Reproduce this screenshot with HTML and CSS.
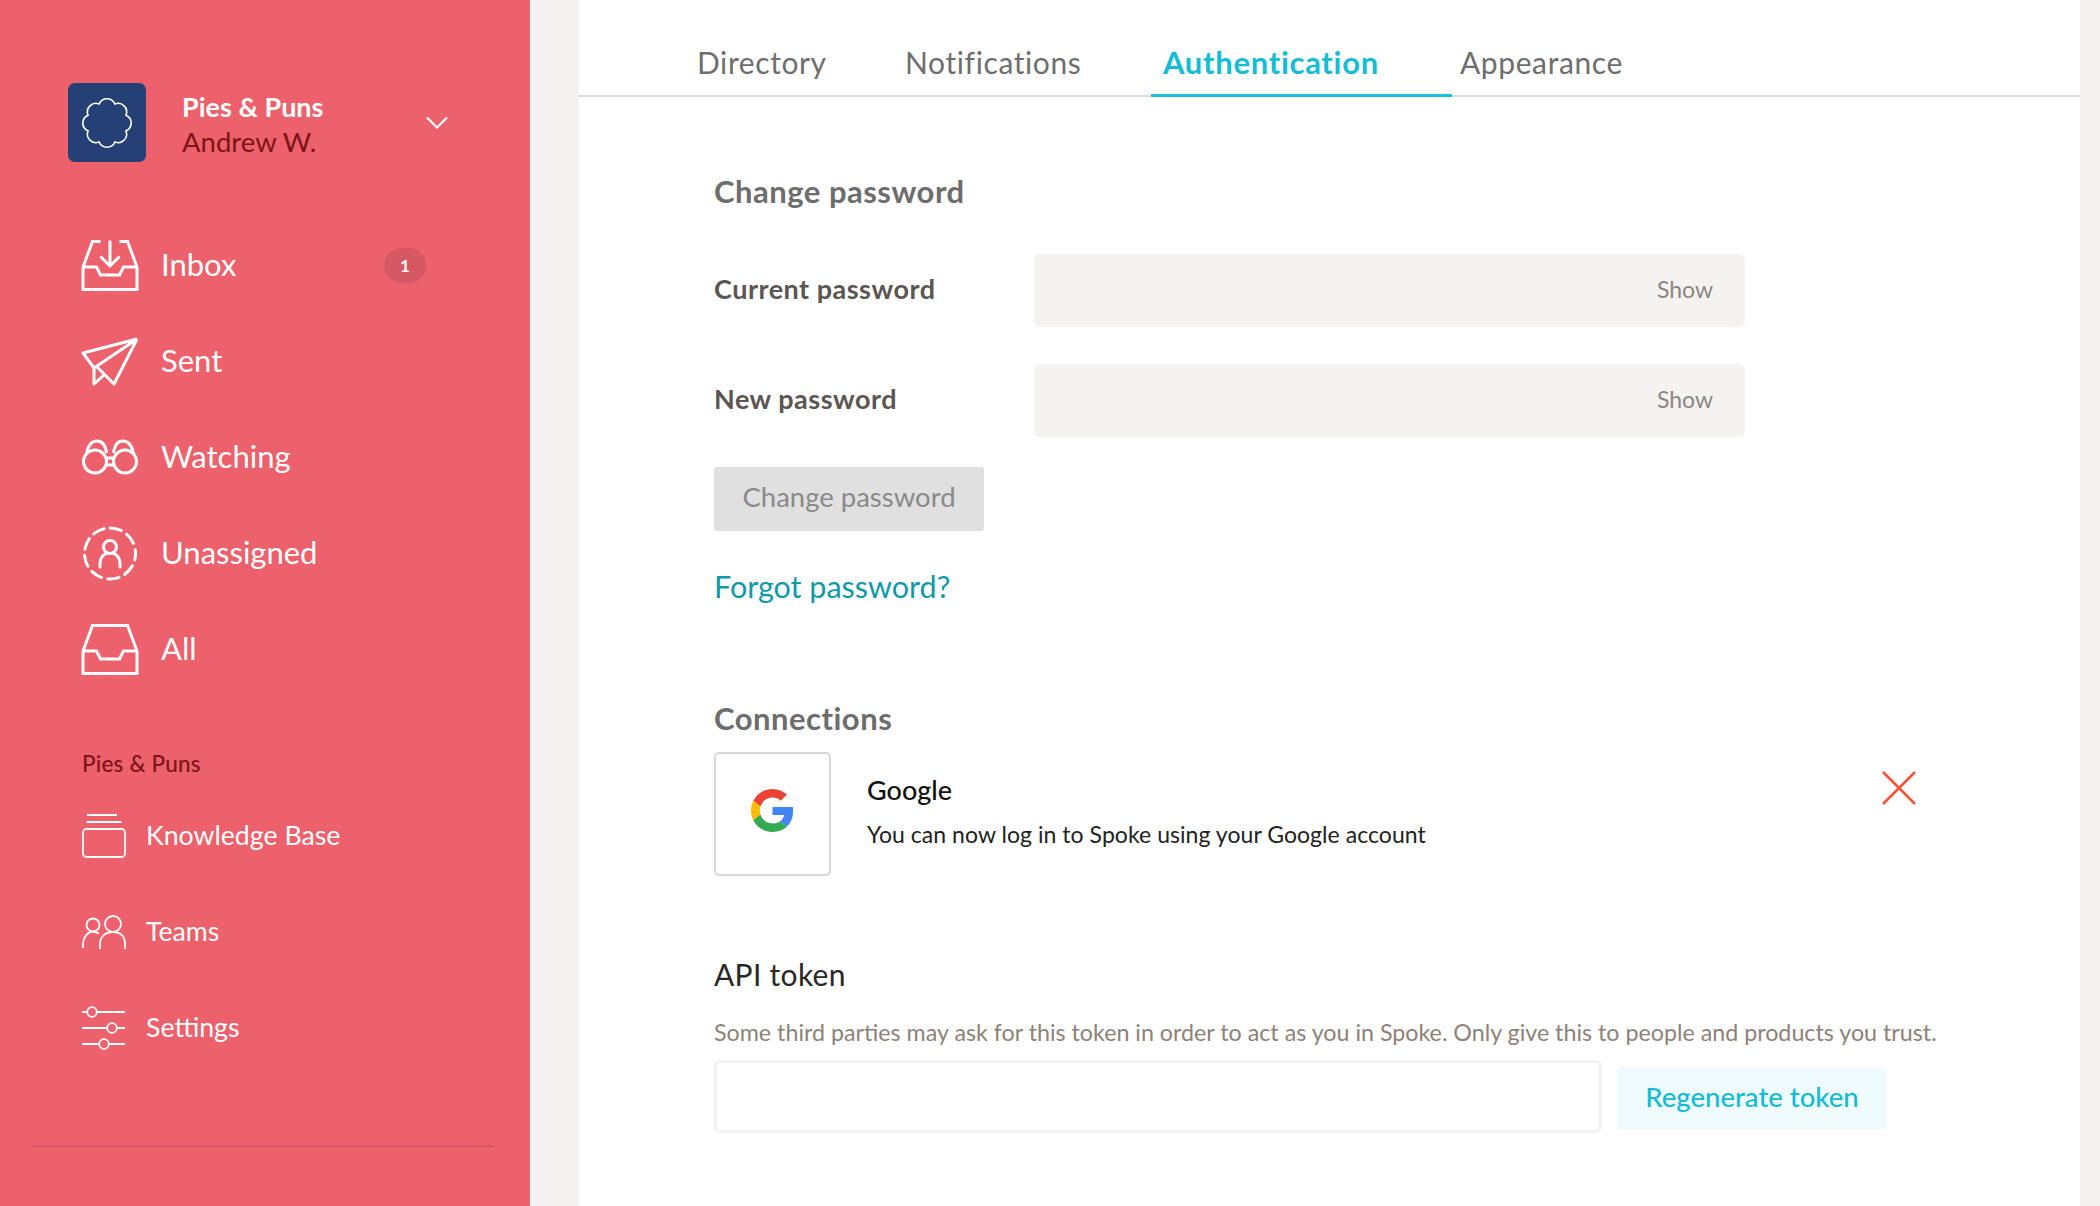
FILE: index.html
```html
<!DOCTYPE html>
<html lang="en">
<head>
<meta charset="utf-8">
<title>Settings – Authentication</title>
<link rel="stylesheet" href="styles.css">
</head>
<body>
<div class="app">
  <aside class="sidebar">
    <header class="account">
      <div class="avatar">
        <svg width="50" height="50" viewBox="0 0 50 50" fill="none" stroke="#fff" stroke-width="1.600"><path d="M17.150 6.060A8.500 8.500 0 0 1 32.850 6.060 8.500 8.500 0 0 1 43.940 17.150 8.500 8.500 0 0 1 43.940 32.850 8.500 8.500 0 0 1 32.850 43.940 8.500 8.500 0 0 1 17.150 43.940 8.500 8.500 0 0 1 6.060 32.850 8.500 8.500 0 0 1 6.060 17.150 8.500 8.500 0 0 1 17.150 6.060Z"/></svg>
      </div>
      <div class="account-text">
        <div class="org">Pies &amp; Puns</div>
        <div class="user">Andrew W.</div>
      </div>
      <svg class="chevron" width="22" height="13" viewBox="0 0 22 13" fill="none" stroke="#fff" stroke-width="2.200"><path d="M1 1.500 11 11.500 21 1.500"/></svg>
    </header>

    <nav class="nav">
      <a class="nav-item">
        <span class="nav-icon"><svg width="58" height="51" viewBox="0 0 58 51" fill="none" stroke="#fff" stroke-width="3"><path d="M2 27v22.500h54V27M2 27h13.500l4 8h19l4-8H56M2 27 11.500 1.500h8M56 27 46.500 1.500h-8M29 .5V26M19.500 16.500 29 26l9.500-9.500"/></svg></span>
        <span class="nav-label">Inbox</span>
        <span class="badge">1</span>
      </a>
      <a class="nav-item">
        <span class="nav-icon"><svg width="58" height="49" viewBox="0 0 58 49" fill="none" stroke="#fff" stroke-width="3" stroke-linejoin="round"><path d="M56 2 2 16 13 31V47L23 38M15 29 33 47 56 2M56 2 13 31"/></svg></span>
        <span class="nav-label">Sent</span>
      </a>
      <a class="nav-item">
        <span class="nav-icon"><svg width="56" height="36" viewBox="0 0 56 36" fill="none" stroke="#fff" stroke-width="3"><circle cx="13" cy="22.500" r="11.500"/><circle cx="43" cy="22.500" r="11.500"/><path d="M4.500 15C6 6 10 2 15 2c5 0 8.500 4 9.500 12M51.500 15C50 6 46 2 41 2c-5 0-8.500 4-9.500 12M25 19h6M25 26h6"/></svg></span>
        <span class="nav-label">Watching</span>
      </a>
      <a class="nav-item">
        <span class="nav-icon"><svg width="56" height="55" viewBox="0 0 56 55" fill="none" stroke="#fff" stroke-width="3" stroke-linecap="round"><circle cx="28" cy="27.500" r="25.500" stroke-dasharray="11.500 6.300" stroke-dashoffset="5"/><circle cx="28" cy="21" r="6.500"/><path d="M18 41v-4c0-5 4-9.500 7-9.500M38 41v-4c0-5-4-9.500-7-9.500"/></svg></span>
        <span class="nav-label">Unassigned</span>
      </a>
      <a class="nav-item">
        <span class="nav-icon"><svg width="58" height="51" viewBox="0 0 58 51" fill="none" stroke="#fff" stroke-width="3"><path d="M2 27v22.500h54V27M2 27h13.500l4 8h19l4-8H56M2 27 11.500 1.500h35L56 27"/></svg></span>
        <span class="nav-label">All</span>
      </a>
    </nav>

    <div class="section-label">Pies &amp; Puns</div>

    <nav class="subnav">
      <a class="sub-item">
        <span class="sub-icon"><svg width="44" height="44" viewBox="0 0 44 44" fill="none" stroke="#fff" stroke-width="1.800"><path d="M5 1h30M4.500 8h35"/><rect x="1" y="15" width="42" height="28" rx="3.500"/></svg></span>
        <span class="sub-label">Knowledge Base</span>
      </a>
      <a class="sub-item">
        <span class="sub-icon"><svg width="44" height="34" viewBox="0 0 44 34" fill="none" stroke="#fff" stroke-width="1.800"><circle cx="11" cy="10" r="6.500"/><circle cx="31" cy="9" r="8"/><path d="M1 33v-4c0-6 4-11.500 9-12.500 3 0 5 1 7 2M18 34v-5c0-7 5-12 13-12s12 5 12 12v5"/></svg></span>
        <span class="sub-label">Teams</span>
      </a>
      <a class="sub-item">
        <span class="sub-icon"><svg width="43" height="44" viewBox="0 0 43 44" fill="none" stroke="#fff" stroke-width="1.800"><path d="M0 6h5M15 6h28M0 22h25M35 22h8M0 38h17M27 38h16"/><circle cx="10" cy="6" r="4.800"/><circle cx="30" cy="22" r="4.800"/><circle cx="22" cy="38" r="4.800"/></svg></span>
        <span class="sub-label">Settings</span>
      </a>
    </nav>

    <div class="sidebar-rule"></div>
  </aside>

  <main class="main">
    <div class="tabs">
      <a class="tab tab-directory">Directory</a>
      <a class="tab tab-notifications">Notifications</a>
      <a class="tab tab-auth">Authentication</a>
      <a class="tab tab-appearance">Appearance</a>
    </div>

    <div class="content">
      <h2 class="heading heading-first">Change password</h2>
      <div class="field">
        <label class="field-label">Current password</label>
        <div class="input-gray"><span class="show">Show</span></div>
      </div>
      <div class="field">
        <label class="field-label">New password</label>
        <div class="input-gray"><span class="show">Show</span></div>
      </div>
      <button class="btn-disabled">Change password</button>
      <a class="forgot">Forgot password?</a>

      <h2 class="heading heading-conn">Connections</h2>
      <div class="connection">
        <div class="logo-box">
          <svg width="43" height="43" viewBox="0 0 48 48"><path fill="#EA4335" d="M24 9.500c3.540 0 6.710 1.220 9.210 3.600l6.850-6.850C35.900 2.380 30.470 0 24 0 14.620 0 6.510 5.380 2.560 13.220l7.980 6.190C12.430 13.720 17.740 9.500 24 9.500z"/><path fill="#4285F4" d="M46.980 24.550c0-1.570-.15-3.090-.38-4.550H24v9.020h12.940c-.58 2.960-2.260 5.480-4.780 7.180l7.730 6c4.510-4.180 7.090-10.360 7.090-17.650z"/><path fill="#FBBC05" d="M10.530 28.590c-.48-1.450-.76-2.990-.76-4.590s.27-3.140.76-4.590l-7.980-6.190C.92 16.460 0 20.120 0 24c0 3.880.92 7.540 2.560 10.780l7.970-6.190z"/><path fill="#34A853" d="M24 48c6.480 0 11.930-2.130 15.890-5.810l-7.730-6c-2.150 1.450-4.920 2.300-8.160 2.300-6.260 0-11.570-4.220-13.470-9.910l-7.980 6.190C6.510 42.620 14.620 48 24 48z"/></svg>
        </div>
        <div class="connection-text">
          <div class="connection-name">Google</div>
          <div class="connection-desc">You can now log in to Spoke using your Google account</div>
        </div>
        <svg class="remove" width="34" height="34" viewBox="0 0 34 34" fill="none" stroke="#f4533d" stroke-width="2.600"><path d="M1 1l32 32M33 1 1 33"/></svg>
      </div>

      <h3 class="api-title">API token</h3>
      <p class="api-desc">Some third parties may ask for this token in order to act as you in Spoke. Only give this to people and products you trust.</p>
      <div class="token-row">
        <div class="token-input"></div>
        <button class="btn-token">Regenerate token</button>
      </div>
    </div>
  </main>
</div>
</body>
</html>
```

FILE: styles.css
```css
* { box-sizing: border-box; }
html, body { margin: 0; height: 100%; }
body { font-family: Lato, "Open Sans", sans-serif; background: #f4f3f1; overflow: hidden; }
.app { display: flex; height: 1206px; }

.sidebar { width: 530px; flex: none; background: #ec616b; color: #fff; padding-top: 83px; }
.account { display: flex; align-items: center; padding-left: 68px; height: 79px; }
.avatar { width: 78px; height: 79px; border-radius: 7px; background: #254075; display: flex; align-items: center; justify-content: center; }
.account-text { margin-left: 36px; width: 244px; padding-top: 3px; }
.org { font-size: 27px; font-weight: 700; line-height: 35px; }
.user { font-size: 27.500px; line-height: 36px; color: #7d1418; }
.chevron { display: block; }

.nav { margin-top: 55px; }
.nav-item { display: flex; align-items: center; height: 96px; padding-left: 81px; font-size: 31px; font-weight: 400; }
.nav-icon { width: 58px; display: flex; justify-content: center; margin-right: 22px; }
.nav-icon svg, .sub-icon svg { display: block; }
.nav-label { width: 223px; padding-bottom: 3px; }
.badge { width: 42px; height: 35px; border-radius: 18px; background: #d55864; font-size: 17px; font-weight: 700; display: flex; align-items: center; justify-content: center; }

.section-label { margin-top: 52px; padding-left: 82px; font-size: 22.500px; line-height: 30px; color: #7d1418; font-weight: 500; letter-spacing: 0.2px; }
.subnav { margin-top: 9px; }
.sub-item { display: flex; align-items: center; height: 96px; padding-left: 82px; font-size: 26.700px; font-weight: 400; }
.sub-icon { width: 44px; margin-right: 20px; }
.sub-label { padding-bottom: 3px; }
.sidebar-rule { margin: 69px 0 0 32px; width: 462px; height: 2px; background: #d25561; }

.main { width: 1501px; flex: none; margin-left: 49px; background: #fff; }
.tabs { display: flex; height: 97px; border-bottom: 2px solid #dcdcdc; padding-left: 106px; }
.tab { display: block; height: 97px; padding: 42px 0 0 12px; font-size: 30px; line-height: 40px; color: #6e6e6e; letter-spacing: 0.6px; }
.tab-directory { width: 208px; }
.tab-notifications { width: 258px; }
.tab-auth { width: 301px; margin-right: -4px; font-size: 31px; font-weight: 700; letter-spacing: 0.7px; color: #13bdd6; border-bottom: 3px solid #1cc0d8; }
.tab-appearance { width: 240px; }

.content { padding: 0 0 0 135px; }
.heading { margin: 0; font-size: 31px; line-height: 40px; font-weight: 700; color: #6d6d6d; letter-spacing: 0.5px; }
.heading-first { margin-top: 74px; }
.heading-conn { margin-top: 92px; }

.field { display: flex; align-items: center; height: 73px; margin-bottom: 37px; }
.heading-first + .field { margin-top: 43px; }
.field-label { width: 320px; font-size: 27px; font-weight: 700; color: #5c5652; letter-spacing: 0.5px; padding-bottom: 4px; }
.input-gray { width: 711px; height: 73px; border-radius: 6px; background: #f4f3f1; display: flex; align-items: center; justify-content: flex-end; padding-right: 32px; }
.show { font-size: 23px; color: #8c8580; padding-bottom: 4px; }

.btn-disabled { display: block; width: 270px; height: 64px; margin-top: -7px; padding: 0 0 5px; border: 0; border-radius: 3px; background: #e0e0e0; color: #8a8a8a; font: 400 27.500px Lato, sans-serif; }
.forgot { display: block; margin-top: 35px; font-size: 30.500px; line-height: 40px; color: #0e9aa9; }

.connection { display: flex; align-items: flex-start; margin-top: 14px; height: 124px; }
.logo-box { width: 117px; height: 124px; border: 2px solid #d8d8d8; border-radius: 5px; display: flex; align-items: center; justify-content: center; padding-bottom: 7px; }
.connection-text { margin-left: 36px; padding-top: 20px; width: 1015px; }
.connection-name { font-size: 27px; line-height: 36px; font-weight: 500; color: #111; }
.connection-desc { font-size: 23px; line-height: 36px; margin-top: 8px; color: #222; letter-spacing: 0.05px; }
.remove { margin-top: 19px; }

.api-title { margin: 78px 0 0; font-size: 30px; line-height: 40px; font-weight: 400; color: #2a2725; letter-spacing: 0.3px; }
.api-desc { margin: 20px 0 0; font-size: 23.250px; line-height: 36px; color: #8d8279; white-space: nowrap; }
.token-row { display: flex; align-items: center; margin-top: 10px; }
.token-input { width: 888px; height: 73px; border: 3px solid #f3f2f1; border-radius: 6px; background: #fff; }
.btn-token { width: 270px; height: 63px; margin-left: 15px; margin-top: 3px; padding: 0 0 3px; border: 0; border-radius: 3px; background: #effbfd; color: #12bcd4; font: 500 27.500px Lato, sans-serif; }
```
